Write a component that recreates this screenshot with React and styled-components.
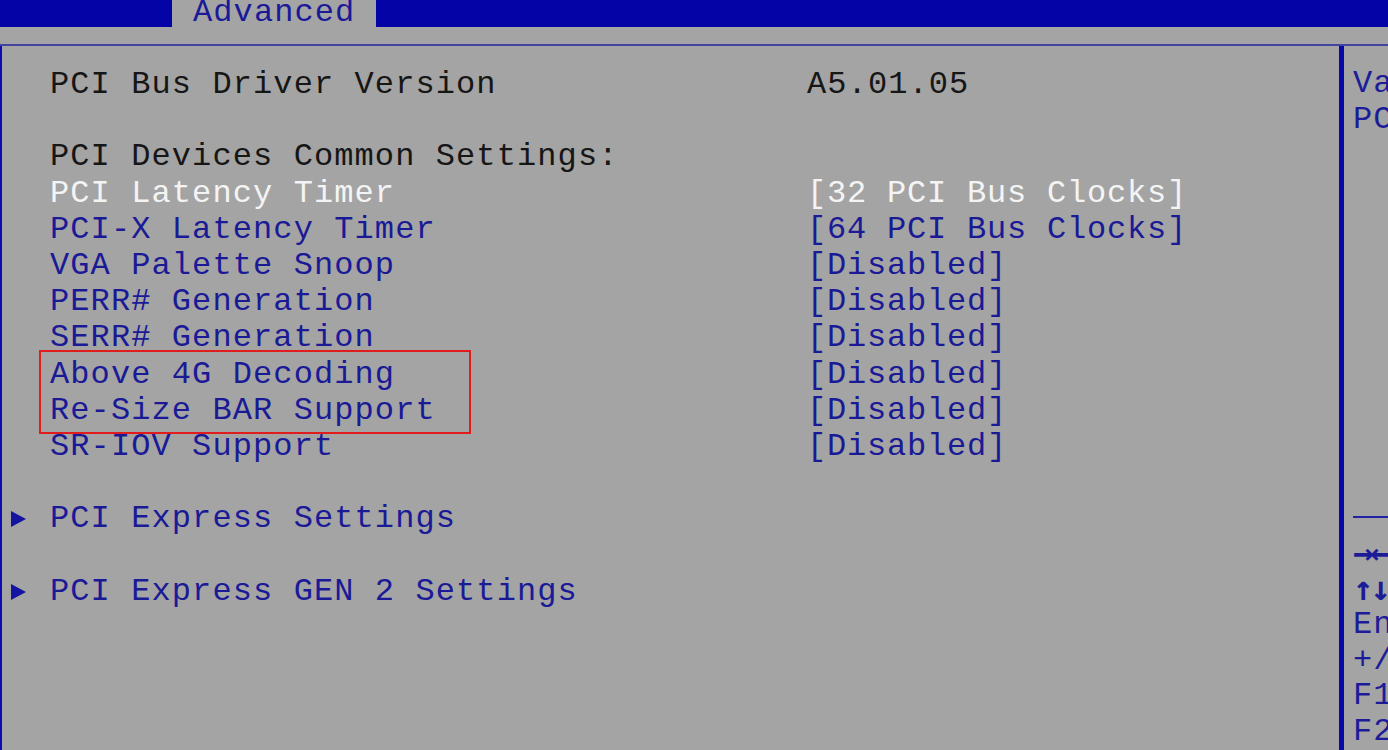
import styled, { createGlobalStyle } from "styled-components";

const GlobalStyle = createGlobalStyle`
  body {
    margin: 0;
    background: #a4a4a4;
    overflow: hidden;
  }
`

const ROW = 36.2;

const Screen = styled.div`
  width: 1388px;
  height: 750px;
  display: flex;
  flex-direction: column;
  background: #a4a4a4;
  font-family: "Liberation Mono", "DejaVu Sans Mono", monospace;
  font-size: 32px;
  letter-spacing: 1.1px;
  overflow: hidden;
`

const TopBar = styled.div`
  height: 27px;
  background: #0404a6;
  display: flex;
  align-items: flex-start;
  flex-shrink: 0;
`

const Tab = styled.div`
  margin-left: 172px;
  width: 204px;
  height: 27px;
  box-sizing: border-box;
  padding-left: 21px;
  background: #a4a4a4;
  color: #1a1a98;
  line-height: 25px;
  white-space: nowrap;
  overflow: hidden;
`

const Band = styled.div`
  height: 17px;
  flex-shrink: 0;
  border-bottom: 2px solid #4444a0;
`

const Main = styled.div`
  flex: 1;
  display: flex;
  min-height: 0;
`

const LeftPane = styled.div`
  width: 1337px;
  flex-shrink: 0;
  border-left: 2px solid #0c0cb0;
  padding-top: 21px;
  display: flex;
  flex-direction: column;
`

const Divider = styled.div`
  width: 5px;
  flex-shrink: 0;
  background: #0808a8;
`

const RightPane = styled.div`
  flex: 1;
  padding-left: 9px;
  padding-top: 20px;
  color: #1c1c98;
  overflow: hidden;
  white-space: nowrap;
  display: flex;
  flex-direction: column;
`

const Row = styled.div`
  height: ${ROW}px;
  line-height: ${ROW}px;
  display: grid;
  grid-template-columns: 48px 757px 1fr;
  align-items: center;
  white-space: nowrap;
  color: ${props =>
    props.$tone === "white" ? "#f4f4f4" : props.$tone === "black" ? "#161616" : "#1a1a96"};
`

const Marker = styled.span`
  display: flex;
  align-items: center;
  padding-left: 9px;
  height: 100%;
`

const Value = styled.span`
  letter-spacing: ${props => (props.$tight ? 0.8 : 1.1)}px;
`

const Highlight = styled.div`
  position: relative;
  &::after {
    content: "";
    position: absolute;
    left: 37px;
    width: 428px;
    top: -7px;
    bottom: -5px;
    border: 2px solid #e01c1c;
    pointer-events: none;
  }
`

const HelpLine = styled.div`
  height: ${ROW}px;
  line-height: ${ROW}px;
  overflow: hidden;
`

const Keys = styled.span`
  font-family: "DejaVu Sans Mono", monospace;
  font-weight: 700;
  font-size: 34px;
  line-height: 1;
  letter-spacing: -3px;
`

const HelpRule = styled.div`
  height: ${ROW}px;
  display: flex;
  align-items: center;
  &::before {
    content: "";
    flex: 1;
    height: 2px;
    background: #2222a4;
  }
`

const Spacer = styled.div`
  height: ${props => props.$rows * ROW}px;
  flex-shrink: 0;
`

const Arrow = () => (
  <svg width="15" height="16" viewBox="0 0 15 16">
    <polygon points="0,0 15,8 0,16" fill="#1414a0" />
  </svg>
)

const settings = [
  { label: "PCI Latency Timer", value: "[32 PCI Bus Clocks]", tone: "white" },
  { label: "PCI-X Latency Timer", value: "[64 PCI Bus Clocks]" },
  { label: "VGA Palette Snoop", value: "[Disabled]" },
  { label: "PERR# Generation", value: "[Disabled]" },
  { label: "SERR# Generation", value: "[Disabled]" },
]

const marked = [
  { label: "Above 4G Decoding", value: "[Disabled]" },
  { label: "Re-Size BAR Support", value: "[Disabled]" },
]

const SettingRow = ({ label, value, tone }) => (
  <Row $tone={tone}>
    <Marker />
    <span>{label}</span>
    <Value $tight>{value}</Value>
  </Row>
)

const App = () => {
  return (
    <Screen>
      <GlobalStyle />
      <TopBar>
        <Tab>Advanced</Tab>
      </TopBar>
      <Band />
      <Main>
        <LeftPane>
          <Row $tone="black">
            <Marker />
            <span>PCI Bus Driver Version</span>
            <Value>A5.01.05</Value>
          </Row>
          <Row />
          <Row $tone="black">
            <Marker />
            <span>PCI Devices Common Settings:</span>
          </Row>
          {settings.map((item, index) => (
            <SettingRow key={index} {...item} />
          ))}
          <Highlight>
            {marked.map((item, index) => (
              <SettingRow key={index} {...item} />
            ))}
          </Highlight>
          <SettingRow label="SR-IOV Support" value="[Disabled]" />
          <Row />
          <Row>
            <Marker><Arrow /></Marker>
            <span>PCI Express Settings</span>
          </Row>
          <Row />
          <Row>
            <Marker><Arrow /></Marker>
            <span>PCI Express GEN 2 Settings</span>
          </Row>
        </LeftPane>
        <Divider />
        <RightPane>
          <HelpLine>Value to be programmed into</HelpLine>
          <HelpLine>PCI Latency Timer Register.</HelpLine>
          <Spacer $rows={10} />
          <HelpRule />
          <HelpLine><Keys>→←</Keys>: Select Screen</HelpLine>
          <HelpLine><Keys>↑↓</Keys>: Select Item</HelpLine>
          <HelpLine>Enter: Select</HelpLine>
          <HelpLine>+/-: Change Opt.</HelpLine>
          <HelpLine>F1: General Help</HelpLine>
          <HelpLine>F2: Previous Values</HelpLine>
        </RightPane>
      </Main>
    </Screen>
  );
}

export default App;
